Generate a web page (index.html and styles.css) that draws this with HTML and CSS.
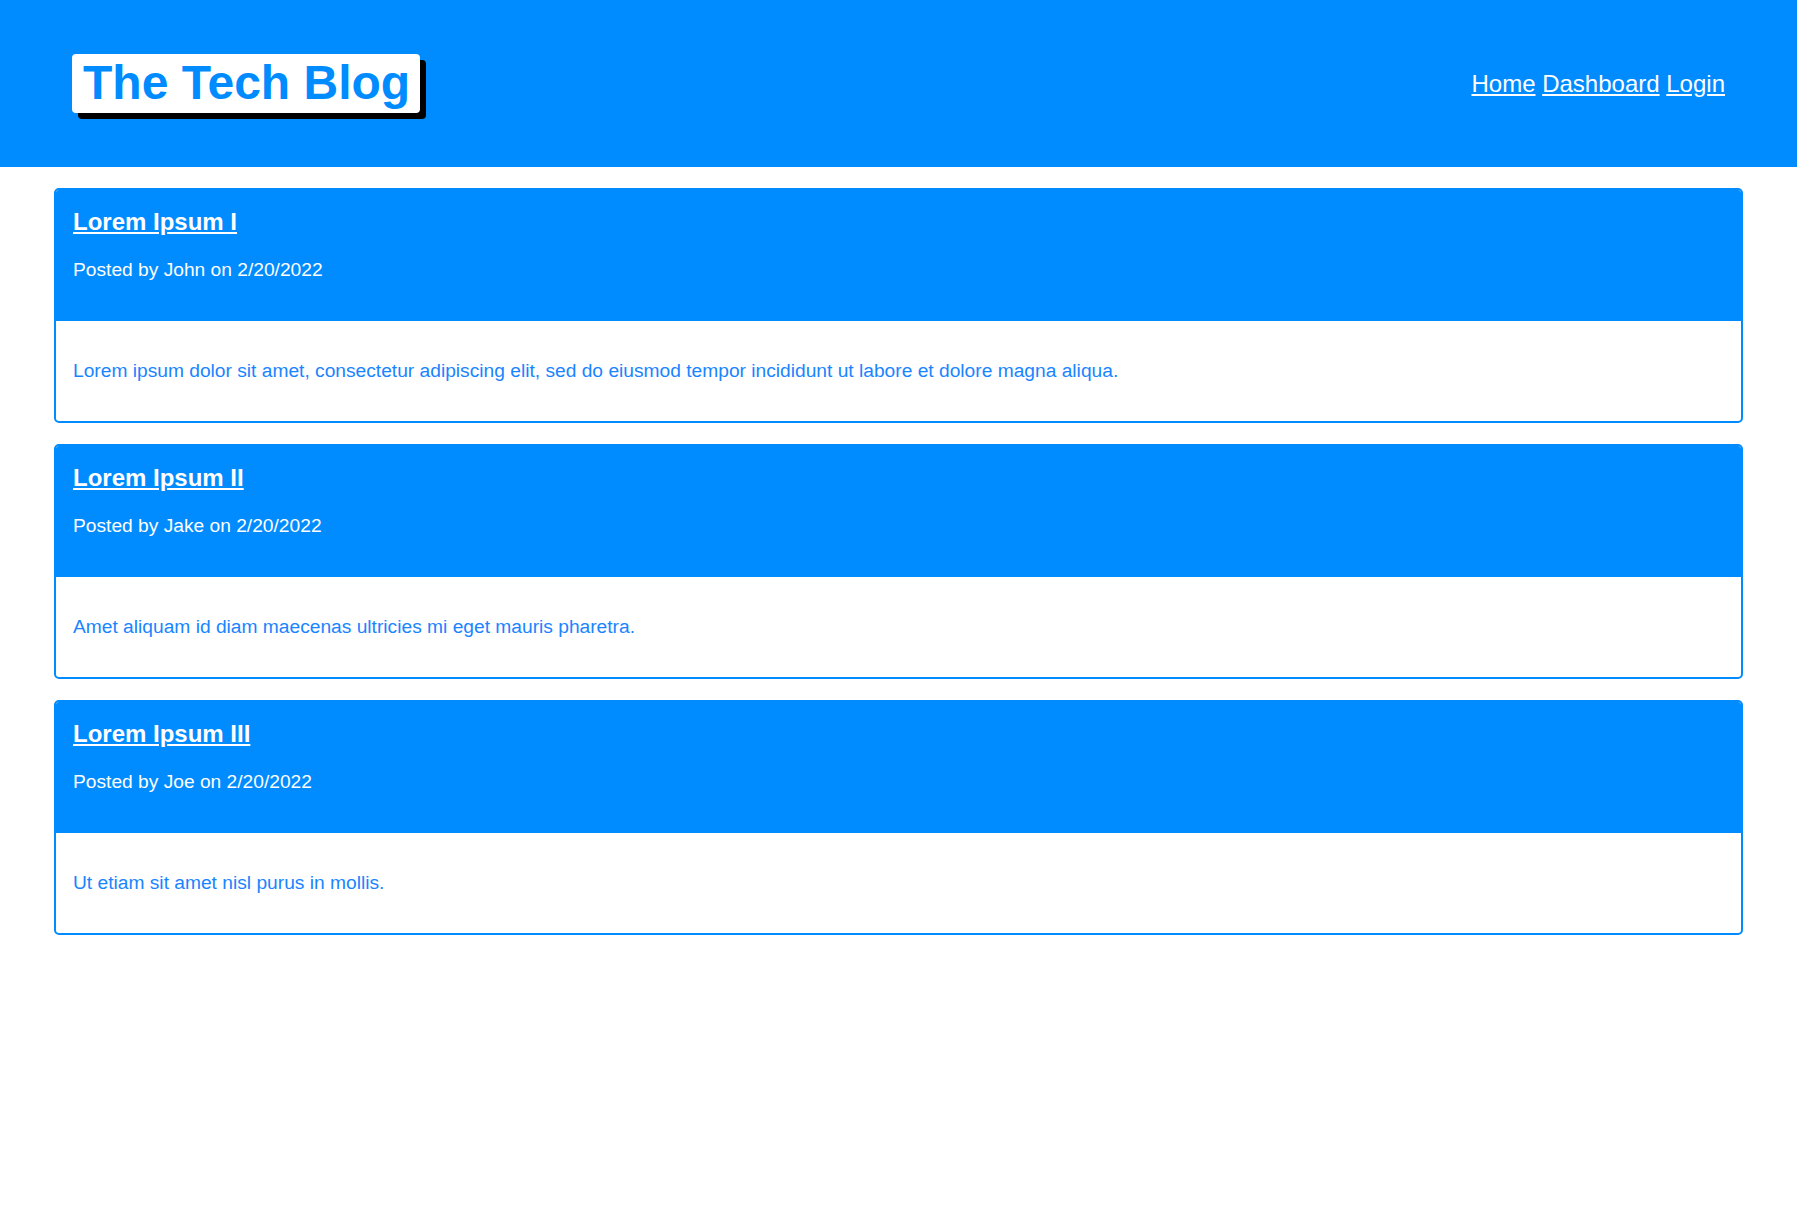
FILE: index.html
```html
<!DOCTYPE html>
<html lang="en">
<head>
<meta charset="utf-8">
<title>The Tech Blog</title>
<link rel="stylesheet" href="styles.css">
</head>
<body>
<header class="site-header">
  <h1 class="logo">The Tech Blog</h1>
  <nav class="nav">
    <a href="#">Home</a> <a href="#">Dashboard</a> <a href="#">Login</a>
  </nav>
</header>
<main class="posts">
  <article class="card">
    <div class="card-head">
      <h2 class="card-title"><a href="#">Lorem Ipsum I</a></h2>
      <p class="card-meta">Posted by John on 2/20/2022</p>
    </div>
    <div class="card-body">
      <p>Lorem ipsum dolor sit amet, consectetur adipiscing elit, sed do eiusmod tempor incididunt ut labore et dolore magna aliqua.</p>
    </div>
  </article>
  <article class="card">
    <div class="card-head">
      <h2 class="card-title"><a href="#">Lorem Ipsum II</a></h2>
      <p class="card-meta">Posted by Jake on 2/20/2022</p>
    </div>
    <div class="card-body">
      <p>Amet aliquam id diam maecenas ultricies mi eget mauris pharetra.</p>
    </div>
  </article>
  <article class="card">
    <div class="card-head">
      <h2 class="card-title"><a href="#">Lorem Ipsum III</a></h2>
      <p class="card-meta">Posted by Joe on 2/20/2022</p>
    </div>
    <div class="card-body">
      <p>Ut etiam sit amet nisl purus in mollis.</p>
    </div>
  </article>
</main>
</body>
</html>
```
FILE: styles.css
```css
* { box-sizing: border-box; }
html, body {
  margin: 0;
  padding: 0;
  background: #fff;
  font-family: "Liberation Sans", Arial, sans-serif;
}
.site-header {
  height: 167px;
  background: #008cff;
  display: flex;
  align-items: center;
  justify-content: space-between;
  padding: 0 72px 0 72px;
}
.logo {
  margin: 0;
  background: #fff;
  color: #008cff;
  font-weight: 700;
  font-size: 48px;
  line-height: 56px;
  height: 59px;
  padding: 1px 10px 2px 11px;
  border-radius: 4px;
  box-shadow: 6px 6px 0 #000;
  white-space: nowrap;
}
.nav {
  font-size: 24px;
  line-height: 28px;
  color: #fff;
}
.nav a { color: #fff; text-decoration: underline; }
.posts {
  padding: 21px 54px;
  display: flex;
  flex-direction: column;
  gap: 21px;
}
.card {
  border: 2px solid #008cff;
  border-radius: 5px;
  overflow: hidden;
}
.card-head {
  background: #008cff;
  color: #fff;
  padding: 18px 17px 40px;
}
.card-title {
  margin: 0;
  font-size: 24px;
  line-height: 28px;
  font-weight: 700;
}
.card-title a { color: #fff; text-decoration: underline; }
.card-meta {
  margin: 23px 0 0;
  font-size: 19.2px;
  line-height: 22px;
}
.card-body {
  padding: 39px 17px 39px;
  color: #1a84ff;
}
.card-body p {
  margin: 0;
  font-size: 19.2px;
  line-height: 22px;
}
```
